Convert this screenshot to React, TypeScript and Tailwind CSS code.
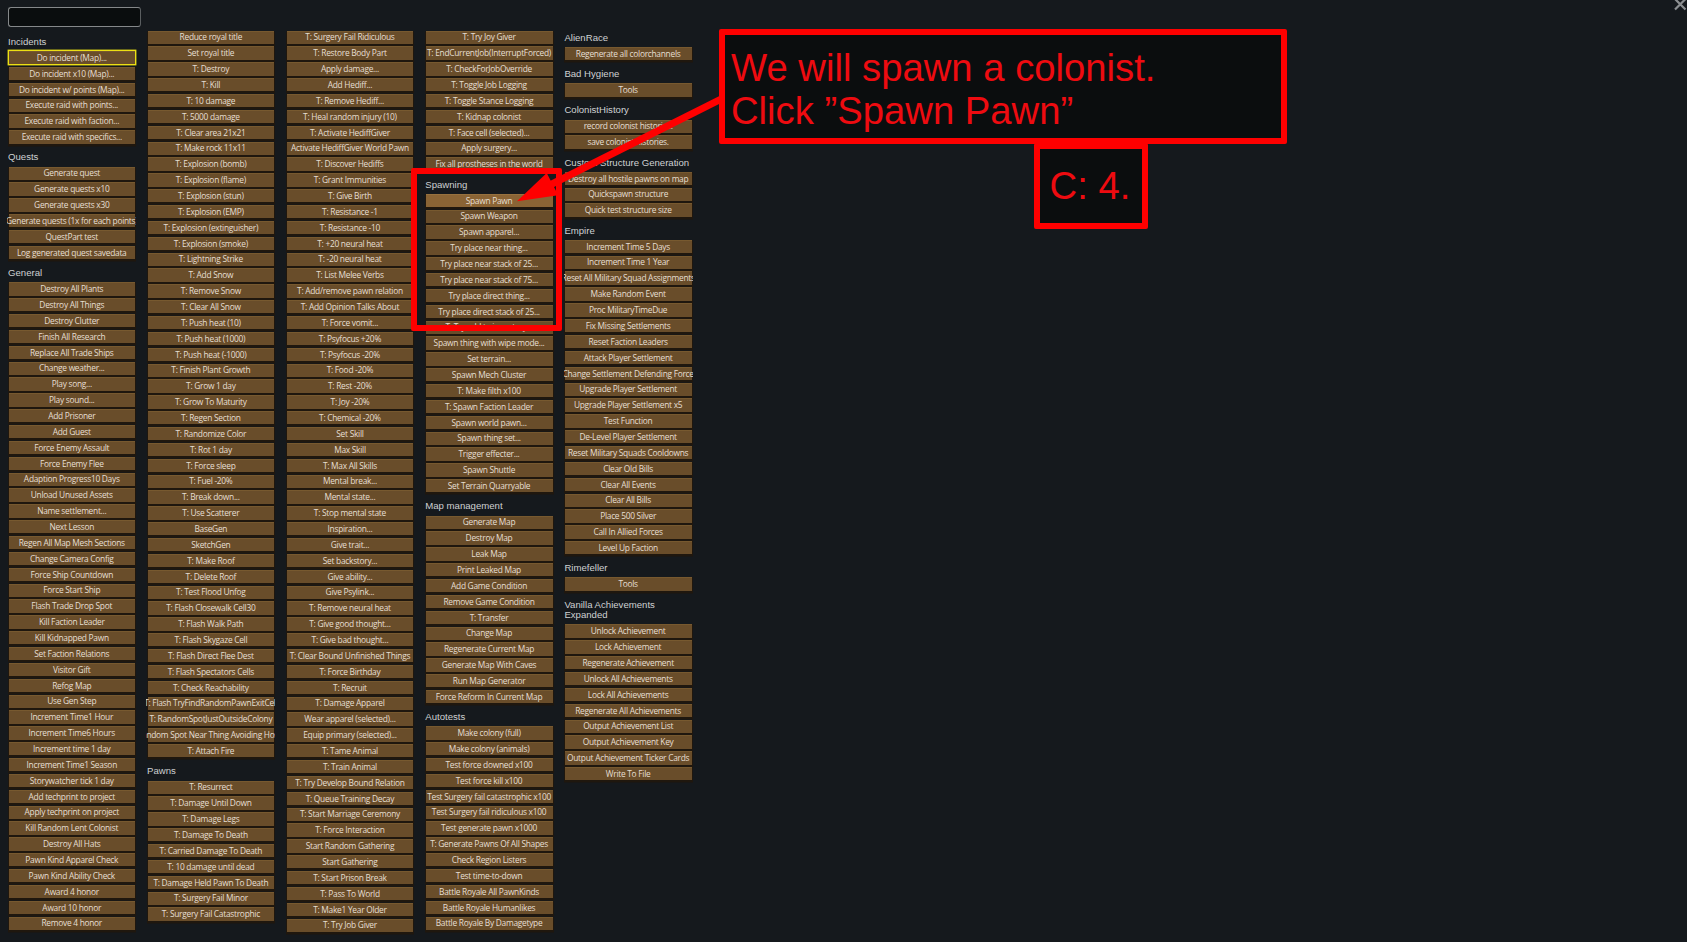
import React from "react";

type Group = { title?: string; items: string[] };

const columns: Group[][] = [
  [
    {
      title: "Incidents",
      items: ["Do incident (Map)...", "Do incident x10 (Map)...", "Do incident w/ points (Map)...", "Execute raid with points...", "Execute raid with faction...", "Execute raid with specifics..."],
    },
    {
      title: "Quests",
      items: ["Generate quest", "Generate quests x10", "Generate quests x30", "Generate quests (1x for each points)", "QuestPart test", "Log generated quest savedata"],
    },
    {
      title: "General",
      items: [
        "Destroy All Plants", "Destroy All Things", "Destroy Clutter", "Finish All Research", "Replace All Trade Ships", "Change weather...", "Play song...", "Play sound...",
        "Add Prisoner", "Add Guest", "Force Enemy Assault", "Force Enemy Flee", "Adaption Progress10 Days", "Unload Unused Assets", "Name settlement...", "Next Lesson",
        "Regen All Map Mesh Sections", "Change Camera Config", "Force Ship Countdown", "Force Start Ship", "Flash Trade Drop Spot", "Kill Faction Leader", "Kill Kidnapped Pawn",
        "Set Faction Relations", "Visitor Gift", "Refog Map", "Use Gen Step", "Increment Time1 Hour", "Increment Time6 Hours", "Increment time 1 day", "Increment Time1 Season",
        "Storywatcher tick 1 day", "Add techprint to project", "Apply techprint on project", "Kill Random Lent Colonist", "Destroy All Hats", "Pawn Kind Apparel Check",
        "Pawn Kind Ability Check", "Award 4 honor", "Award 10 honor", "Remove 4 honor",
      ],
    },
  ],
  [
    {
      items: [
        "Reduce royal title", "Set royal title", "T: Destroy", "T: Kill", "T: 10 damage", "T: 5000 damage", "T: Clear area 21x21", "T: Make rock 11x11", "T: Explosion (bomb)",
        "T: Explosion (flame)", "T: Explosion (stun)", "T: Explosion (EMP)", "T: Explosion (extinguisher)", "T: Explosion (smoke)", "T: Lightning Strike", "T: Add Snow",
        "T: Remove Snow", "T: Clear All Snow", "T: Push heat (10)", "T: Push heat (1000)", "T: Push heat (-1000)", "T: Finish Plant Growth", "T: Grow 1 day", "T: Grow To Maturity",
        "T: Regen Section", "T: Randomize Color", "T: Rot 1 day", "T: Force sleep", "T: Fuel -20%", "T: Break down...", "T: Use Scatterer", "BaseGen", "SketchGen", "T: Make Roof",
        "T: Delete Roof", "T: Test Flood Unfog", "T: Flash Closewalk Cell30", "T: Flash Walk Path", "T: Flash Skygaze Cell", "T: Flash Direct Flee Dest",
        "T: Flash Spectators Cells", "T: Check Reachability", "T: Flash TryFindRandomPawnExitCell", "T: RandomSpotJustOutsideColony", "T: Random Spot Near Thing Avoiding Hostiles", "T: Attach Fire",
      ],
    },
    {
      title: "Pawns",
      items: ["T: Resurrect", "T: Damage Until Down", "T: Damage Legs", "T: Damage To Death", "T: Carried Damage To Death", "T: 10 damage until dead", "T: Damage Held Pawn To Death", "T: Surgery Fail Minor", "T: Surgery Fail Catastrophic"],
    },
  ],
  [
    {
      items: [
        "T: Surgery Fail Ridiculous", "T: Restore Body Part", "Apply damage...", "Add Hediff...", "T: Remove Hediff...", "T: Heal random injury (10)", "T: Activate HediffGiver",
        "Activate HediffGiver World Pawn", "T: Discover Hediffs", "T: Grant Immunities", "T: Give Birth", "T: Resistance -1", "T: Resistance -10", "T: +20 neural heat",
        "T: -20 neural heat", "T: List Melee Verbs", "T: Add/remove pawn relation", "T: Add Opinion Talks About", "T: Force vomit...", "T: Psyfocus +20%", "T: Psyfocus -20%",
        "T: Food -20%", "T: Rest -20%", "T: Joy -20%", "T: Chemical -20%", "Set Skill", "Max Skill", "T: Max All Skills", "Mental break...", "Mental state...", "T: Stop mental state",
        "Inspiration...", "Give trait...", "Set backstory...", "Give ability...", "Give Psylink...", "T: Remove neural heat", "T: Give good thought...", "T: Give bad thought...",
        "T: Clear Bound Unfinished Things", "T: Force Birthday", "T: Recruit", "T: Damage Apparel", "Wear apparel (selected)...", "Equip primary (selected)...", "T: Tame Animal",
        "T: Train Animal", "T: Try Develop Bound Relation", "T: Queue Training Decay", "T: Start Marriage Ceremony", "T: Force Interaction", "Start Random Gathering",
        "Start Gathering", "T: Start Prison Break", "T: Pass To World", "T: Make1 Year Older", "T: Try Job Giver",
      ],
    },
  ],
  [
    {
      items: ["T: Try Joy Giver", "T: EndCurrentJob(InterruptForced)", "T: CheckForJobOverride", "T: Toggle Job Logging", "T: Toggle Stance Logging", "T: Kidnap colonist", "T: Face cell (selected)...", "Apply surgery...", "Fix all prostheses in the world"],
    },
    {
      title: "Spawning",
      items: [
        "Spawn Pawn", "Spawn Weapon", "Spawn apparel...", "Try place near thing...", "Try place near stack of 25...", "Try place near stack of 75...", "Try place direct thing...",
        "Try place direct stack of 25...", "T: Try add to inventory...", "Spawn thing with wipe mode...", "Set terrain...", "Spawn Mech Cluster", "T: Make filth x100", "T: Spawn Faction Leader",
        "Spawn world pawn...", "Spawn thing set...", "Trigger effecter...", "Spawn Shuttle", "Set Terrain Quarryable",
      ],
    },
    {
      title: "Map management",
      items: ["Generate Map", "Destroy Map", "Leak Map", "Print Leaked Map", "Add Game Condition", "Remove Game Condition", "T: Transfer", "Change Map", "Regenerate Current Map", "Generate Map With Caves", "Run Map Generator", "Force Reform In Current Map"],
    },
    {
      title: "Autotests",
      items: [
        "Make colony (full)", "Make colony (animals)", "Test force downed x100", "Test force kill x100", "Test Surgery fail catastrophic x100", "Test Surgery fail ridiculous x100",
        "Test generate pawn x1000", "T: Generate Pawns Of All Shapes", "Check Region Listers", "Test time-to-down", "Battle Royale All PawnKinds", "Battle Royale Humanlikes", "Battle Royale By Damagetype",
      ],
    },
  ],
  [
    { title: "AlienRace", items: ["Regenerate all colorchannels"] },
    { title: "Bad Hygiene", items: ["Tools"] },
    { title: "ColonistHistory", items: ["record colonist histories.", "save colonist histories."] },
    { title: "Custom Structure Generation", items: ["Destroy all hostile pawns on map", "Quickspawn structure", "Quick test structure size"] },
    {
      title: "Empire",
      items: [
        "Increment Time 5 Days", "Increment Time 1 Year", "Reset All Military Squad Assignments", "Make Random Event", "Proc MilitaryTimeDue", "Fix Missing Settlements", "Reset Faction Leaders",
        "Attack Player Settlement", "Change Settlement Defending Force", "Upgrade Player Settlement", "Upgrade Player Settlement x5", "Test Function", "De-Level Player Settlement",
        "Reset Military Squads Cooldowns", "Clear Old Bills", "Clear All Events", "Clear All Bills", "Place 500 Silver", "Call In Allied Forces", "Level Up Faction",
      ],
    },
    { title: "Rimefeller", items: ["Tools"] },
    {
      title: "Vanilla Achievements Expanded",
      items: ["Unlock Achievement", "Lock Achievement", "Regenerate Achievement", "Unlock All Achievements", "Lock All Achievements", "Regenerate All Achievements", "Output Achievement List", "Output Achievement Key", "Output Achievement Ticker Cards", "Write To File"],
    },
  ],
];

function MenuButton({ label }: { label: string }) {
  const selected = label === "Do incident (Map)...";
  const hovered = label === "Spawn Pawn";
  const face = hovered ? "bg-[#8a6435] border-[#96713f]" : "bg-[#694d2a] border-[#77592f]";
  return (
    <div className="h-[15.87px] w-full">
      <button
        className={`flex h-[13.3px] w-full items-center justify-center border-t pr-[0.8px] pb-[1.6px] whitespace-nowrap text-[8.4px] leading-[11px] tracking-[-0.28px] text-[#e6dfd3] ${face} ${
          selected ? "shadow-[0_0_0_1.4px_#ece014]" : "shadow-[0_1.5px_0_1px_#1f170e]"
        }`}
      >
        <span className="-mx-[1.3px] flex w-[129px] shrink-0 justify-center overflow-hidden">
          <span className="shrink-0">{label}</span>
        </span>
      </button>
    </div>
  );
}

function Section({ group }: { group: Group }) {
  return (
    <section>
      {group.title && (
        <h2 className="-ml-px pt-[2.2px] pb-[3.6px] font-['Liberation_Sans',sans-serif] text-[9.6px] leading-[10.6px] text-[#cfd1d3]">{group.title}</h2>
      )}
      {group.items.map((label, i) => (
        <MenuButton key={i} label={label} />
      ))}
    </section>
  );
}

export default function App() {
  return (
    <main className="relative h-[942px] w-[1687px] overflow-hidden bg-[#15191d] font-['Open_Sans','Noto_Sans',sans-serif]">
      <div className="flex gap-[12.8px] pl-[9px]">
        {columns.map((groups, i) => (
          <div key={i} className={`flex w-[126.3px] shrink-0 flex-col gap-[4.1px] ${i === 0 ? "pt-[7px]" : "pt-[30.5px]"}`}>
            {i === 0 && (
              <input className="mb-[3.5px] -ml-px h-5 w-[132.5px] rounded-[3px] border border-[#85888a] border-r-[#5a5e60] bg-[#0a0d0e] outline-none" />
            )}
            {groups.map((g, j) => (
              <Section key={j} group={g} />
            ))}
          </div>
        ))}
      </div>

      <svg className="absolute top-0 right-0" width="14" height="12" viewBox="0 0 14 12" fill="none" stroke="#8b8e91" strokeWidth="2.2">
        <path d="M2 -1 L12.5 9.5 M12.5 -1 L2 9.5" />
      </svg>

      <div className="absolute top-[168px] left-[411px] h-[163px] w-[151px] rounded-[2px] border-[6px] border-[#fe0000]" />
      <svg className="absolute top-0 left-0" width="740" height="220" viewBox="0 0 740 220">
        <path d="M722 98.7 L548 186" stroke="#fe0000" strokeWidth="7" />
        <path d="M517 201.3 L546.7 173 L558.3 195.3 Z" fill="#fe0000" />
      </svg>
      <div className="absolute top-[29px] left-[719px] h-[115px] w-[568px] rounded-[2px] border-[6px] border-[#fe0000] bg-[#0b0d0e] pt-[11px] pl-[6px] font-['Liberation_Sans',sans-serif] text-[38.25px] leading-[43px] whitespace-nowrap text-[#ee0b10]">
        <p>We will spawn a colonist.</p>
        <p>Click ”Spawn Pawn”</p>
      </div>
      <div className="absolute top-[143px] left-[1034px] flex h-[86px] w-[114px] items-center justify-center rounded-[2px] border-[6px] border-[#fe0000] bg-[#0b0d0e] pr-[2px] pb-px font-['Liberation_Sans',sans-serif] text-[38.25px] leading-[43px] whitespace-nowrap text-[#ee0b10]">
        C: 4.
      </div>
    </main>
  );
}
